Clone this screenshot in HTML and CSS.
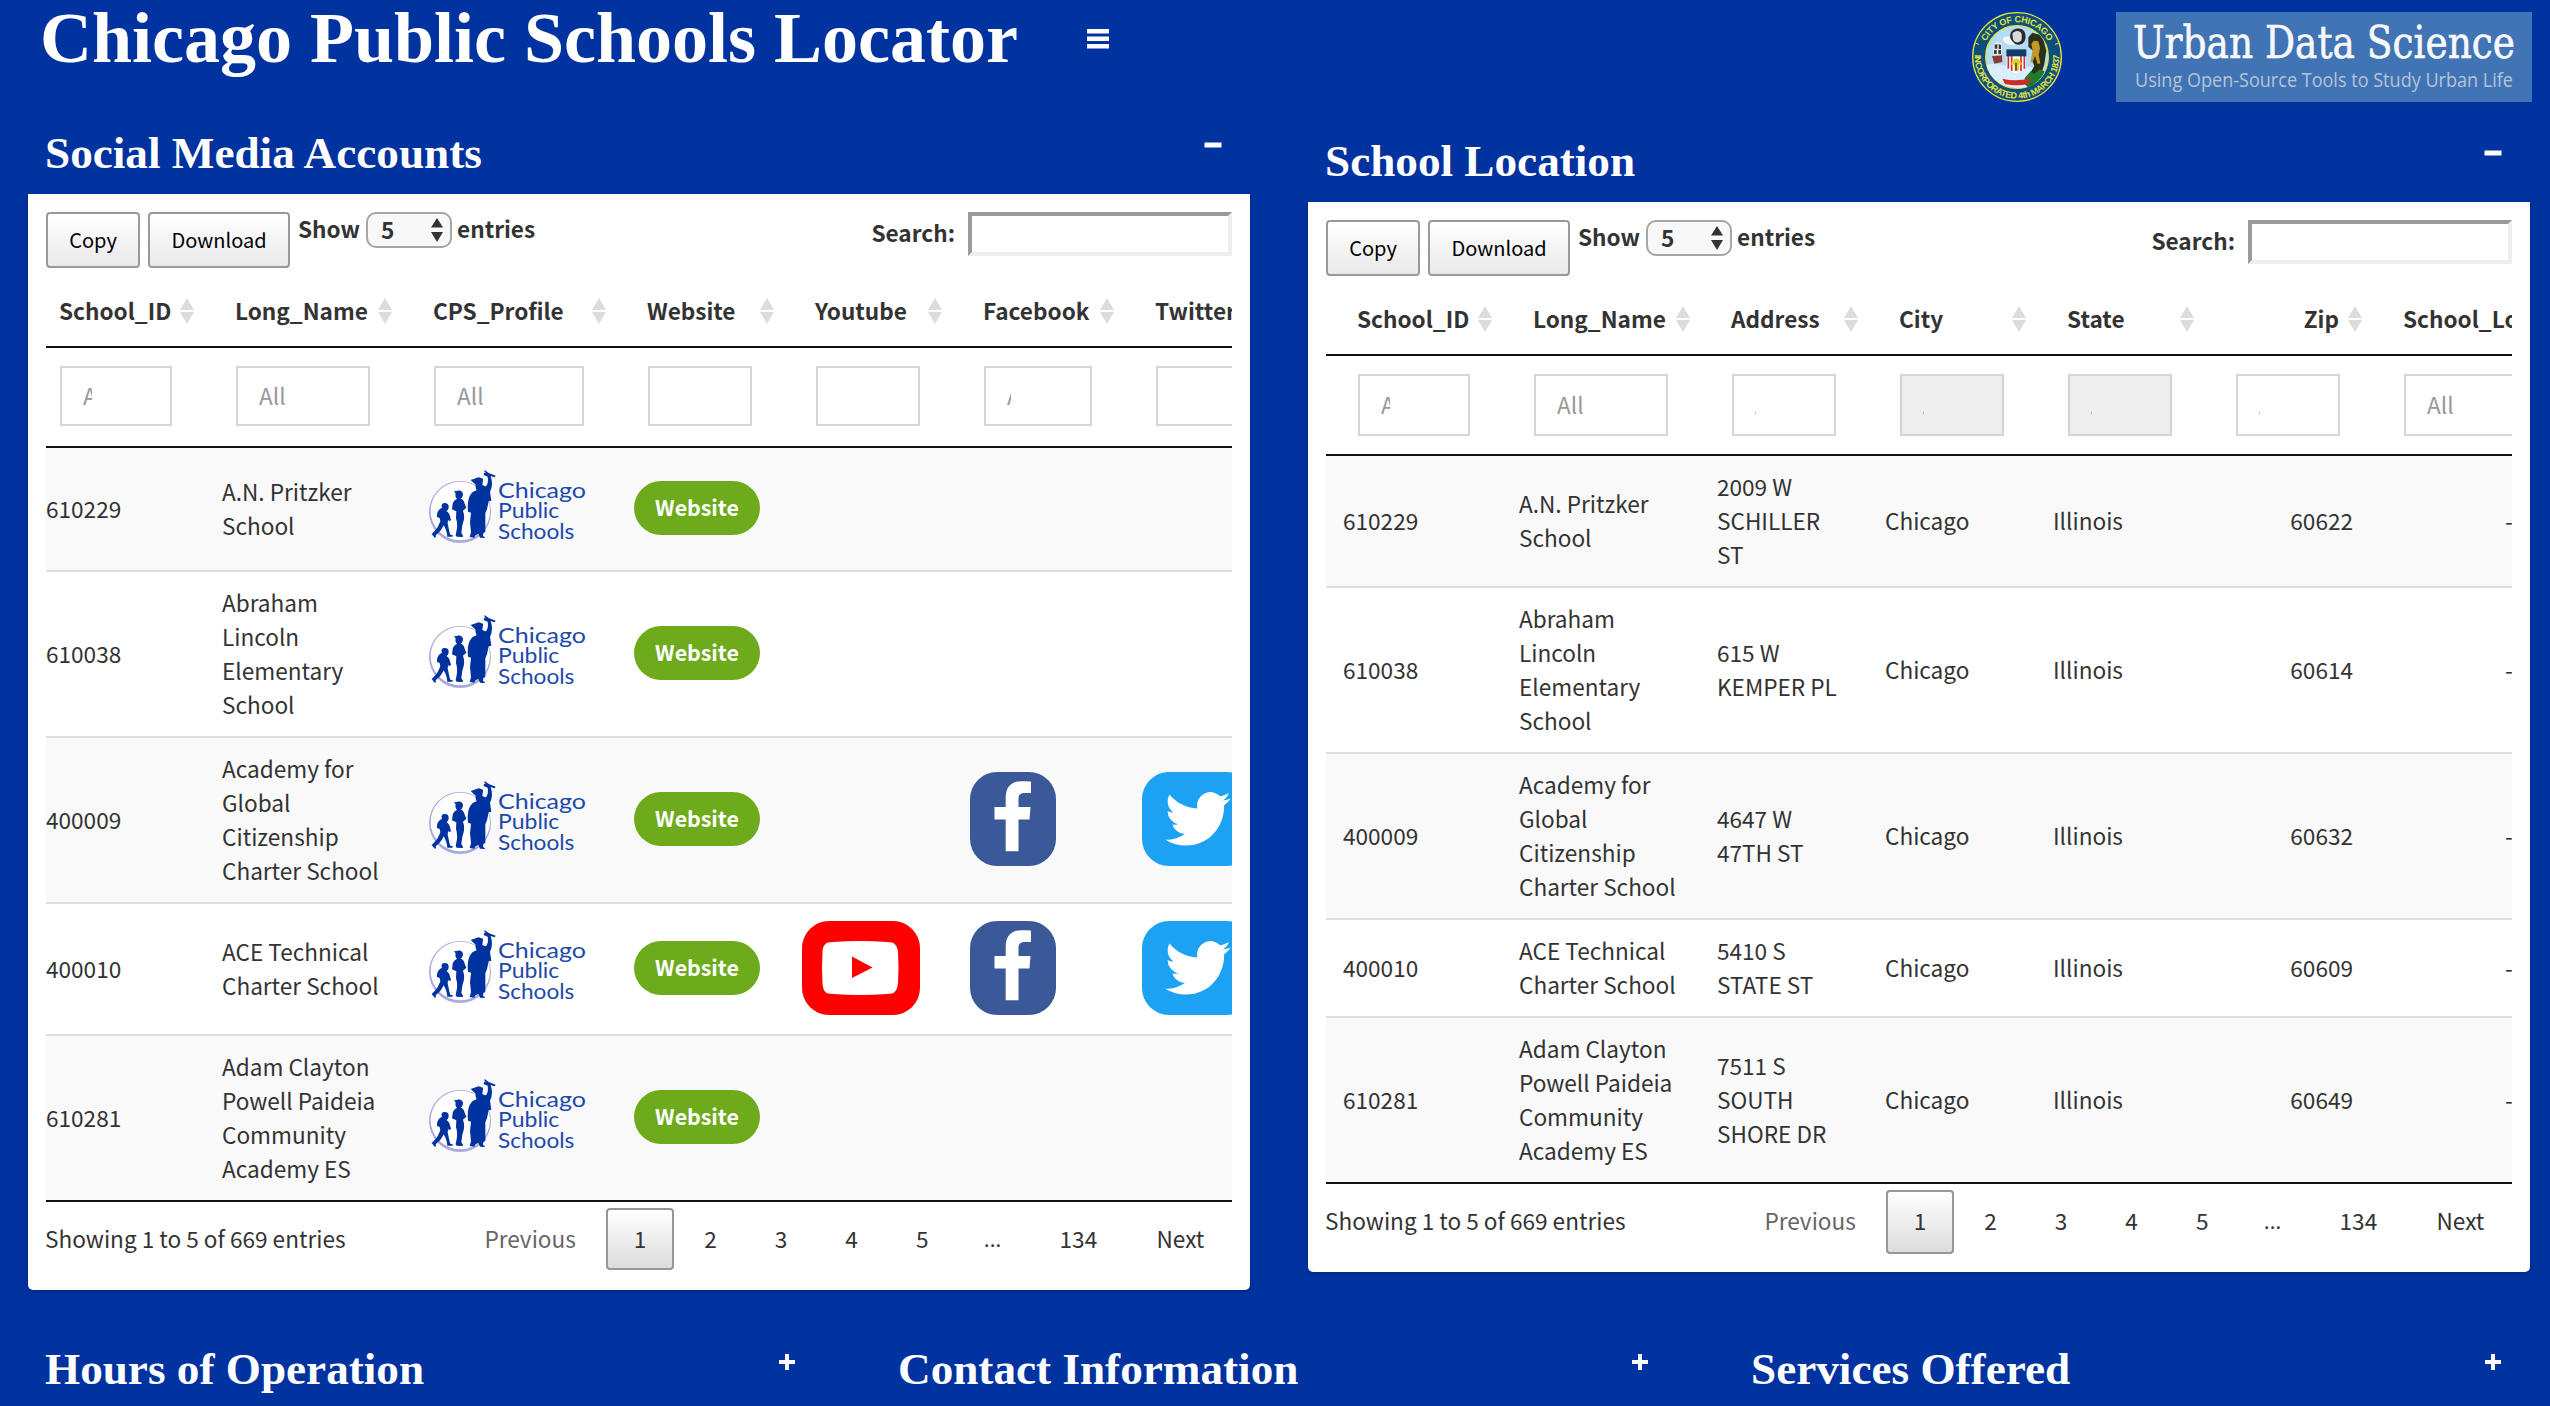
FILE: index.html
```html
<!DOCTYPE html>
<html lang="en">
<head>
<meta charset="utf-8">
<title>Chicago Public Schools Locator</title>
<link rel="stylesheet" href="styles.css">
</head>
<body>
<svg width="0" height="0" class="sprites" aria-hidden="true">
  <symbol id="cps" viewBox="24 24 480 222">
    <circle cx="120" cy="150" r="91" fill="#fff"/>
    <path fill="#a9aade" fill-rule="evenodd" d="M120 57a93 93 0 1 1 0 186a93 93 0 1 1 0-186zM121 59a89 88 0 1 0 0 176a89 88 0 1 0 0-176z"/>
    <g fill="#0032a0">
      <path d="M74 123c8 0 13 5 12 12l-1 6c-1 4-4 5-6 6 6 3 10 9 11 16l3 12-5 2-4-3-1 11c3 10 4 22 8 33l7 2v4H82c-1-14-5-24-11-34-5 12-13 22-24 30l1 6-4 1-9-11 4-4c10-8 17-20 22-34l-2-10-8-3c-1-10 2-20 10-25l5-3c-3-8 0-14 8-14z"/>
      <path d="M102 86l6 2c6-4 16-2 19 3 3 4 2 9 0 13-1 3-4 5-6 5 8 4 12 9 13 16l5 12-10 9 3 12c2 12-2 22-5 33l-3 22 5 8-1 4-18-1-3-4 4-22c1-10 0-20-3-29l1-21-13-6 2-16c2-8 7-13 13-15-4-5-6-10-4-16z"/>
      <path d="M152 54l24-8 13 4v4l-2 15c5 2 8 4 11 4 6-8 7-18 5-29l-12-5 1-6 5-1-5-5 3-2 11 8 21 8-3 5-12-4c6 18 5 34-2 47l4 27-8 2-5 24-5 12v56l-6 3-1 9 6 4-1 2-14-1-5-12-10 6-2 6-14-2 4-14-3-30 3-29-9-3c-2-22 0-42 9-53 4-6 12-9 17-11-3-6-4-12-3-17z"/>
    </g>
    <g class="cps-text">
      <text x="234" y="108" textLength="264" lengthAdjust="spacingAndGlyphs">Chicago</text>
      <text x="234" y="169" textLength="184" lengthAdjust="spacingAndGlyphs">Public</text>
      <text x="234" y="230" textLength="229" lengthAdjust="spacingAndGlyphs">Schools</text>
    </g>
  </symbol>
  <symbol id="youtube" viewBox="0 0 118 94">
    <rect width="118" height="94" rx="27" fill="#f00"/>
    <path fill="#fff" d="M31 21Q58 19 85 21C93 21 95 24 96 31Q97 47 96 62C95 70 93 73 85 73Q58 75 31 73C23 73 21 70 20.500 62Q19.500 47 20.500 31C21 24 23 21 31 21z"/>
    <path fill="#f00" d="M50 35.500L70.500 46.500 50 57z"/>
  </symbol>
  <symbol id="facebook" viewBox="0 0 86 94">
    <rect width="86" height="94" rx="27" fill="#3b5998"/>
    <path fill="#fff" d="M35.700 79.300V47.500H24.500V35H35.700V26C35.700 15 41 9.200 51 9.200Q57 9 61 9.400V21H55C49.500 21 48.500 23 48.500 28V35H60.500L59.500 47.500H48.500V79.300Z"/>
  </symbol>
  <symbol id="twitter" viewBox="0 0 112 94">
    <rect width="112" height="94" rx="27" fill="#1da1f2"/>
    <path fill="#fff" transform="translate(23 13.900) scale(2.740)" d="M23.953 4.570a10 10 0 01-2.825.775 4.958 4.958 0 002.163-2.723c-.951.555-2.005.959-3.127 1.184a4.920 4.920 0 00-8.384 4.482C7.690 8.095 4.067 6.130 1.640 3.162a4.822 4.822 0 00-.666 2.475c0 1.710.870 3.213 2.188 4.096a4.904 4.904 0 01-2.228-.616v.060a4.923 4.923 0 003.946 4.827 4.996 4.996 0 01-2.212.085 4.936 4.936 0 004.604 3.417 9.867 9.867 0 01-6.102 2.105c-.390 0-.779-.023-1.170-.067a13.995 13.995 0 007.557 2.209c9.053 0 13.998-7.496 13.998-13.985 0-.210 0-.420-.015-.630A9.935 9.935 0 0024 4.590z"/>
  </symbol>
  <symbol id="sort" viewBox="0 0 14 26">
    <path fill="#dcdcdc" d="M7 0L14 12H0zM0 14H14L7 26z"/>
  </symbol>
  <symbol id="plus" viewBox="0 0 18 18">
    <path fill="#fff" d="M7 1h4v6h6v4h-6v6H7v-6H1V7h6z"/>
  </symbol>
  <symbol id="minus" viewBox="0 0 18 18">
    <path fill="#fff" d="M.500 6.500h17v5H.500z"/>
  </symbol>
</svg>

<header class="topbar">
  <h1 class="brand">Chicago Public Schools Locator</h1>
  <svg class="menu" viewBox="0 0 22 20"><path fill="#fff" d="M0 0h22v4.500H0zM0 7.500h22v4.500H0zM0 15h22v4.500H0z"/></svg>
  <svg class="seal" viewBox="18 18 270 270">
    <defs>
      <path id="arc-top" d="M49 153a104 104 0 0 1 208 0"/>
      <path id="arc-bottom" d="M27 135a127 127 0 1 0 252 0"/>
    </defs>
    <circle cx="153" cy="153" r="133" fill="#0c4f7c" stroke="#e3e23a" stroke-width="4"/>
    <circle cx="153" cy="153" r="94" fill="#b5dcf7" stroke="#e3e23a" stroke-width="4"/>
    <path fill="#d9eefb" d="M62 178c30-14 60 10 92 6s50 0 84 10c-10 30-44 52-84 52s-82-24-92-68z"/>
    <path fill="#eef6fc" d="M110 100c4-14 22-10 28-4 10-8 30-6 36 6 4 14-12 16-22 12-14 6-38 4-42-14z"/>
    <path fill="#2b2b2b" d="M134 82c4-16 34-20 42-4 6 14 2 30-8 36-10 4-22 2-26-6-8-6-12-14-8-26z"/>
    <path fill="#d8dcdc" d="M139 84c8-14 28-10 28 2s2 18-8 22c-8 4-16-2-18-8z"/>
    <path fill="#e9e9e9" d="M82 118l10-12 8 4 8 2-2 42H82z"/>
    <path fill="#3a3a3a" d="M86 116l8-2v14h-8zM98 114l7 3v12h-7zM84 132h8v12h-8zM97 132h8v12h-8z"/>
    <path fill="#8a3b33" d="M78 150l30-2 1 20-24 5z"/>
    <path fill="#2c3019" d="M187 94l12-14 22 6 12 18 8 30-6 40-8 26-30 24-6-20 14-24-8-20 4-26-14-12z"/>
    <path fill="#1f7a2a" d="M176 216l18-20 10 8 18-14 14 6c-8 22-26 38-50 48l-10-10z"/>
    <path fill="#c4992c" d="M203 104l14 2 5 20-4 22 5 24-8 2-8-24-8 20-6-2 7-34-4-20z"/>
    <path fill="#fff" d="M122 132h58v46q0 18-29 24-29-6-29-24z"/>
    <path stroke="#d22a32" stroke-width="5" d="M127 150v38M137 150v45M165 150v45M175 150v38"/>
    <path fill="#123e66" d="M121 130h60v21h-60z"/>
    <path fill="#e4cf2b" d="M138 166q13-18 26 0l4 10h-9v18h-14v-18h-10z"/>
    <path fill="#7c5d16" d="M147 170h6v24h-6z"/>
    <path fill="#cf2a26" d="M109 218q42 10 86-2l-8 18q-34 8-70 0z"/>
    <g class="seal-text">
      <text><textPath href="#arc-top" startOffset="50%" text-anchor="middle" textLength="230">CITY OF CHICAGO</textPath></text>
      <text><textPath href="#arc-bottom" startOffset="50%" text-anchor="middle" textLength="408">INCORPORATED 4th MARCH 1837</textPath></text>
    </g>
    <path stroke="#e3e23a" stroke-width="3" d="M29 112l10 3M267 115l10-3"/>
  </svg>
  <svg class="uds" viewBox="0 0 416 90">
    <rect width="416" height="90" fill="#4174b5"/>
    <text class="uds-title" x="17" y="46" textLength="382" lengthAdjust="spacingAndGlyphs">Urban Data Science</text>
    <text class="uds-sub" x="19" y="75" textLength="378" lengthAdjust="spacingAndGlyphs">Using Open-Source Tools to Study Urban Life</text>
  </svg>
</header>

<main>
<div class="row two">
  <section class="box">
    <div class="box-head"><h3>Social Media Accounts</h3><svg class="toggle"><use href="#minus"/></svg></div>
    <div class="box-body">
      <div class="tools">
        <button class="btn copy">Copy</button><button class="btn download">Download</button>
        <span class="length">Show <span class="select">5<svg viewBox="0 0 12 24"><path fill="#333" d="M6 0L12 9.500H0zM0 14H12L6 24z"/></svg></span> entries</span>
        <label class="search">Search:<span class="search-field"></span></label>
      </div>
      <div class="scroll">
        <table class="grid social">
          <colgroup><col class="c176"><col class="c198"><col class="c214"><col class="c168"><col class="c168"><col class="c172"><col class="c168"></colgroup>
          <thead>
            <tr class="names"><th>School_ID<svg class="sort"><use href="#sort"/></svg></th><th>Long_Name<svg class="sort"><use href="#sort"/></svg></th><th>CPS_Profile<svg class="sort"><use href="#sort"/></svg></th><th>Website<svg class="sort"><use href="#sort"/></svg></th><th>Youtube<svg class="sort"><use href="#sort"/></svg></th><th>Facebook<svg class="sort"><use href="#sort"/></svg></th><th>Twitter</th></tr>
            <tr class="filters"><td><div class="filter"><span class="clip8">All</span></div></td><td><div class="filter"><span>All</span></div></td><td><div class="filter"><span>All</span></div></td><td><div class="filter"></div></td><td><div class="filter"></div></td><td><div class="filter"><span class="clip4">All</span></div></td><td><div class="filter"></div></td></tr>
          </thead>
          <tbody>
            <tr class="short"><td>610229</td><td>A.N. Pritzker School</td><td><svg class="cps"><use href="#cps"/></svg></td><td><a class="badge">Website</a></td><td></td><td></td><td></td></tr>
            <tr><td>610038</td><td>Abraham Lincoln Elementary School</td><td><svg class="cps"><use href="#cps"/></svg></td><td><a class="badge">Website</a></td><td></td><td></td><td></td></tr>
            <tr><td>400009</td><td>Academy for Global Citizenship Charter School</td><td><svg class="cps"><use href="#cps"/></svg></td><td><a class="badge">Website</a></td><td></td><td><svg class="fb"><use href="#facebook"/></svg></td><td><svg class="tw"><use href="#twitter"/></svg></td></tr>
            <tr class="mid"><td>400010</td><td>ACE Technical Charter School</td><td><svg class="cps"><use href="#cps"/></svg></td><td><a class="badge">Website</a></td><td><svg class="yt"><use href="#youtube"/></svg></td><td><svg class="fb"><use href="#facebook"/></svg></td><td><svg class="tw"><use href="#twitter"/></svg></td></tr>
            <tr><td>610281</td><td>Adam Clayton Powell Paideia Community Academy ES</td><td><svg class="cps"><use href="#cps"/></svg></td><td><a class="badge">Website</a></td><td></td><td></td><td></td></tr>
          </tbody>
        </table>
      </div>
      <div class="foot">
        <span class="info">Showing 1 to 5 of 669 entries</span>
        <nav class="pages"><a class="off">Previous</a><a class="current">1</a><a>2</a><a>3</a><a>4</a><a>5</a><span class="dots">…</span><a>134</a><a>Next</a></nav>
      </div>
    </div>
  </section>

  <section class="box location">
    <div class="box-head"><h3>School Location</h3><svg class="toggle"><use href="#minus"/></svg></div>
    <div class="box-body">
      <div class="tools">
        <button class="btn copy">Copy</button><button class="btn download">Download</button>
        <span class="length">Show <span class="select">5<svg viewBox="0 0 12 24"><path fill="#333" d="M6 0L12 9.500H0zM0 14H12L6 24z"/></svg></span> entries</span>
        <label class="search">Search:<span class="search-field"></span></label>
      </div>
      <div class="scroll">
        <table class="grid places">
          <colgroup><col class="c194"><col class="c198"><col class="c168"><col class="c168"><col class="c168"><col class="c168"><col class="c194"></colgroup>
          <thead>
            <tr class="names"><th>School_ID<svg class="sort"><use href="#sort"/></svg></th><th>Long_Name<svg class="sort"><use href="#sort"/></svg></th><th>Address<svg class="sort"><use href="#sort"/></svg></th><th>City<svg class="sort"><use href="#sort"/></svg></th><th>State<svg class="sort"><use href="#sort"/></svg></th><th class="num">Zip<svg class="sort"><use href="#sort"/></svg></th><th>School_Longitude</th></tr>
            <tr class="filters"><td><div class="filter"><span class="clip8">All</span></div></td><td><div class="filter"><span>All</span></div></td><td><div class="filter"><span class="clip1">All</span></div></td><td><div class="filter disabled"><span class="clip1">All</span></div></td><td><div class="filter disabled"><span class="clip1">All</span></div></td><td><div class="filter"><span class="clip1">All</span></div></td><td><div class="filter"><span>All</span></div></td></tr>
          </thead>
          <tbody>
            <tr><td>610229</td><td>A.N. Pritzker School</td><td class="addr">2009 W SCHILLER ST</td><td>Chicago</td><td>Illinois</td><td class="num">60622</td><td class="lng">-</td></tr>
            <tr><td>610038</td><td>Abraham Lincoln Elementary School</td><td class="addr">615 W KEMPER PL</td><td>Chicago</td><td>Illinois</td><td class="num">60614</td><td class="lng">-</td></tr>
            <tr><td>400009</td><td>Academy for Global Citizenship Charter School</td><td class="addr">4647 W 47TH ST</td><td>Chicago</td><td>Illinois</td><td class="num">60632</td><td class="lng">-</td></tr>
            <tr><td>400010</td><td>ACE Technical Charter School</td><td class="addr">5410 S STATE ST</td><td>Chicago</td><td>Illinois</td><td class="num">60609</td><td class="lng">-</td></tr>
            <tr><td>610281</td><td>Adam Clayton Powell Paideia Community Academy ES</td><td class="addr">7511 S SOUTH SHORE DR</td><td>Chicago</td><td>Illinois</td><td class="num">60649</td><td class="lng">-</td></tr>
          </tbody>
        </table>
      </div>
      <div class="foot">
        <span class="info">Showing 1 to 5 of 669 entries</span>
        <nav class="pages"><a class="off">Previous</a><a class="current">1</a><a>2</a><a>3</a><a>4</a><a>5</a><span class="dots">…</span><a>134</a><a>Next</a></nav>
      </div>
    </div>
  </section>
</div>

<div class="row three">
  <section class="box"><div class="box-head"><h3>Hours of Operation</h3><svg class="toggle"><use href="#plus"/></svg></div></section>
  <section class="box"><div class="box-head"><h3>Contact Information</h3><svg class="toggle"><use href="#plus"/></svg></div></section>
  <section class="box"><div class="box-head"><h3>Services Offered</h3><svg class="toggle"><use href="#plus"/></svg></div></section>
</div>
</main>
</body>
</html>
```
FILE: styles.css
```css
* { box-sizing: border-box; }
html, body { margin: 0; height: 1406px; overflow: hidden; }
body {
  background: #0032a0;
  color: #333;
  font: 22.6px/34px "Noto Sans CJK SC", "Source Sans Pro", sans-serif;
}
.sprites { display: block; position: absolute; }

.topbar { display: flex; align-items: flex-start; height: 114px; padding: 0 18px 0 40px; }
.brand {
  margin: 0; width: 1047px; color: #fff; white-space: nowrap;
  font: bold 72px/76px "Liberation Serif", "Times New Roman", serif;
}
.menu { width: 22px; height: 20px; margin-top: 29px; }
.seal { width: 90px; height: 90px; margin: 12px 54px 0 auto; }
.seal-text { font: bold 27px "Liberation Sans Narrow", "Liberation Sans", Arial, sans-serif; fill: #e3e23a; }
.uds { width: 416px; height: 90px; margin-top: 12px; }
.uds-title { font: 44px "DejaVu Serif", serif; fill: #f8f8fa; stroke: #f8f8fa; stroke-width: .6px; }
.uds-sub { font: 20px "Open Sans", sans-serif; fill: #b7c3d6; }

.row { display: flex; padding-left: 28px; padding-right: 20px; }
.two { justify-content: space-between; align-items: flex-start; height: 1216px; }
.two .box { width: 1222px; }
.two .location { margin-top: 8px; }
.three { gap: 57px; }
.three .box { flex: 1; }

.box-head { display: flex; justify-content: space-between; height: 80px; padding: 0 28px 0 17px; }
.box-head h3 {
  margin: 12px 0 0; color: #fff; white-space: nowrap;
  font: bold 45.2px/54px "Liberation Serif", "Times New Roman", serif;
}
.toggle { width: 18px; height: 18px; margin-top: 22px; }
.three .toggle { margin-top: 23px; }
.box-body {
  background: #fff; padding: 18px; height: 1096px;
  border-radius: 0 0 5px 5px; box-shadow: 0 2px 4px rgba(0,0,0,.2);
}
.location .box-body { height: 1070px; }

.tools { display: flex; align-items: flex-start; height: 70px; font-weight: bold; }
.btn {
  height: 56px; margin: 0 8px 0 0; padding: 0; color: #000;
  font: 20px/34px "Noto Sans CJK SC", "Source Sans Pro", sans-serif;
  border: 2px solid #999; border-radius: 4px;
  background: linear-gradient(#fff, #e9e9e9);
}
.copy { width: 94px; }
.download { width: 142px; }
.length { display: flex; line-height: 34px; white-space: nowrap; }
.select {
  display: flex; justify-content: space-between; align-items: center;
  width: 86px; height: 36px; margin: 0 5px 0 6px; padding: 0 7px 0 13px;
  border: 2px solid #a6a6a6; border-radius: 10px; background: #f8f8f8;
}
.select svg { width: 12px; height: 24px; }
.search { display: flex; margin-left: auto; line-height: 42px; }
.search-field {
  width: 264px; height: 44px; margin-left: 13px; background: #fff;
  border: 4px solid; border-color: #9a9a9a #eee #eee #9a9a9a;
}

.scroll { overflow: hidden; }
.grid { table-layout: fixed; border-collapse: separate; border-spacing: 0; }
.social { width: 1264px; }
.places { width: 1258px; }
.c168 { width: 168px; }
.c172 { width: 172px; }
.c176 { width: 176px; }
.c194 { width: 194px; }
.c198 { width: 198px; }
.c214 { width: 214px; }

.names th {
  position: relative; height: 66px; padding: 12px 0 18px 13px;
  text-align: left; white-space: nowrap; border-bottom: 2px solid #111;
}
.names .num { text-align: right; padding-right: 51px; }
.sort { position: absolute; right: 28px; top: 16px; width: 14px; height: 26px; }
.filters td { height: 100px; padding: 18px 50px 18px 14px; border-bottom: 2px solid #111; vertical-align: top; }
.filter { height: 62px; padding: 12px 21px; border: 2px solid #d1d5df; color: #999; }
.filter span { display: block; overflow: hidden; }
.social .filter { height: 60px; padding-top: 11px; }
.filter .clip8 { width: 9px; }
.filter .clip4 { width: 4px; }
.filter .clip1 { width: 1px; }
.disabled { background: #eee; }
.places th:first-child { padding-left: 31px; }
.places .filters td:first-child { padding-left: 32px; }
.places tbody td:first-child { padding-left: 17px; }

tbody td { padding: 14px 20px 14px 0; border-bottom: 2px solid #ddd; vertical-align: middle; }
tbody td:nth-child(2) { padding-right: 26px; }
.places tbody td { position: relative; left: -1px; padding-right: 30px; }
.places tbody td:first-child { left: 0; }
tbody tr:nth-child(odd) { background: #f9f9f9; }
tbody tr:last-child td { border-bottom-color: #111; }
.places tbody td.addr { padding-right: 42px; }
.places tbody td.num { text-align: right; padding-right: 36px; }
.places tbody td.lng { padding-left: 116px; }
.social tbody td { padding-top: 0; padding-bottom: 0; height: 166px; }
.social .short td { height: 124px; }
.social .mid td { height: 132px; }
tbody svg { display: block; }
.cps { width: 160px; height: 74px; margin: 0 0 4px 8px; }
.cps-text { font: 63px Lato, sans-serif; fill: #1d49ab; }
.fb, .tw, .yt { height: 94px; margin-bottom: 3px; }
.fb { width: 86px; }
.tw { width: 112px; }
.yt { width: 118px; }
.badge {
  display: block; width: 126px; height: 54px; margin-bottom: 2px; padding-top: 9px; border-radius: 27px;
  background: #6dab1c; color: #fff; font-size: 21.4px; font-weight: bold; text-align: center;
}

.foot { display: flex; justify-content: space-between; padding-top: 6px; }
.info { padding-top: 14px; margin-left: -1px; }
.pages { display: flex; gap: 2.6px; height: 62px; line-height: 34px; }
.location .pages { height: 64px; }
.pages > * { padding: 12px 25.7px 0; border: 2px solid transparent; border-radius: 4px; }
.pages > :last-child { padding-left: 27px; }
.pages .off { color: #666; }
.pages .dots { padding-left: 23px; padding-right: 26px; font-family: "Open Sans", sans-serif; }
.pages .current { border-color: #979797; background: linear-gradient(#fff, #dcdcdc); }
```
